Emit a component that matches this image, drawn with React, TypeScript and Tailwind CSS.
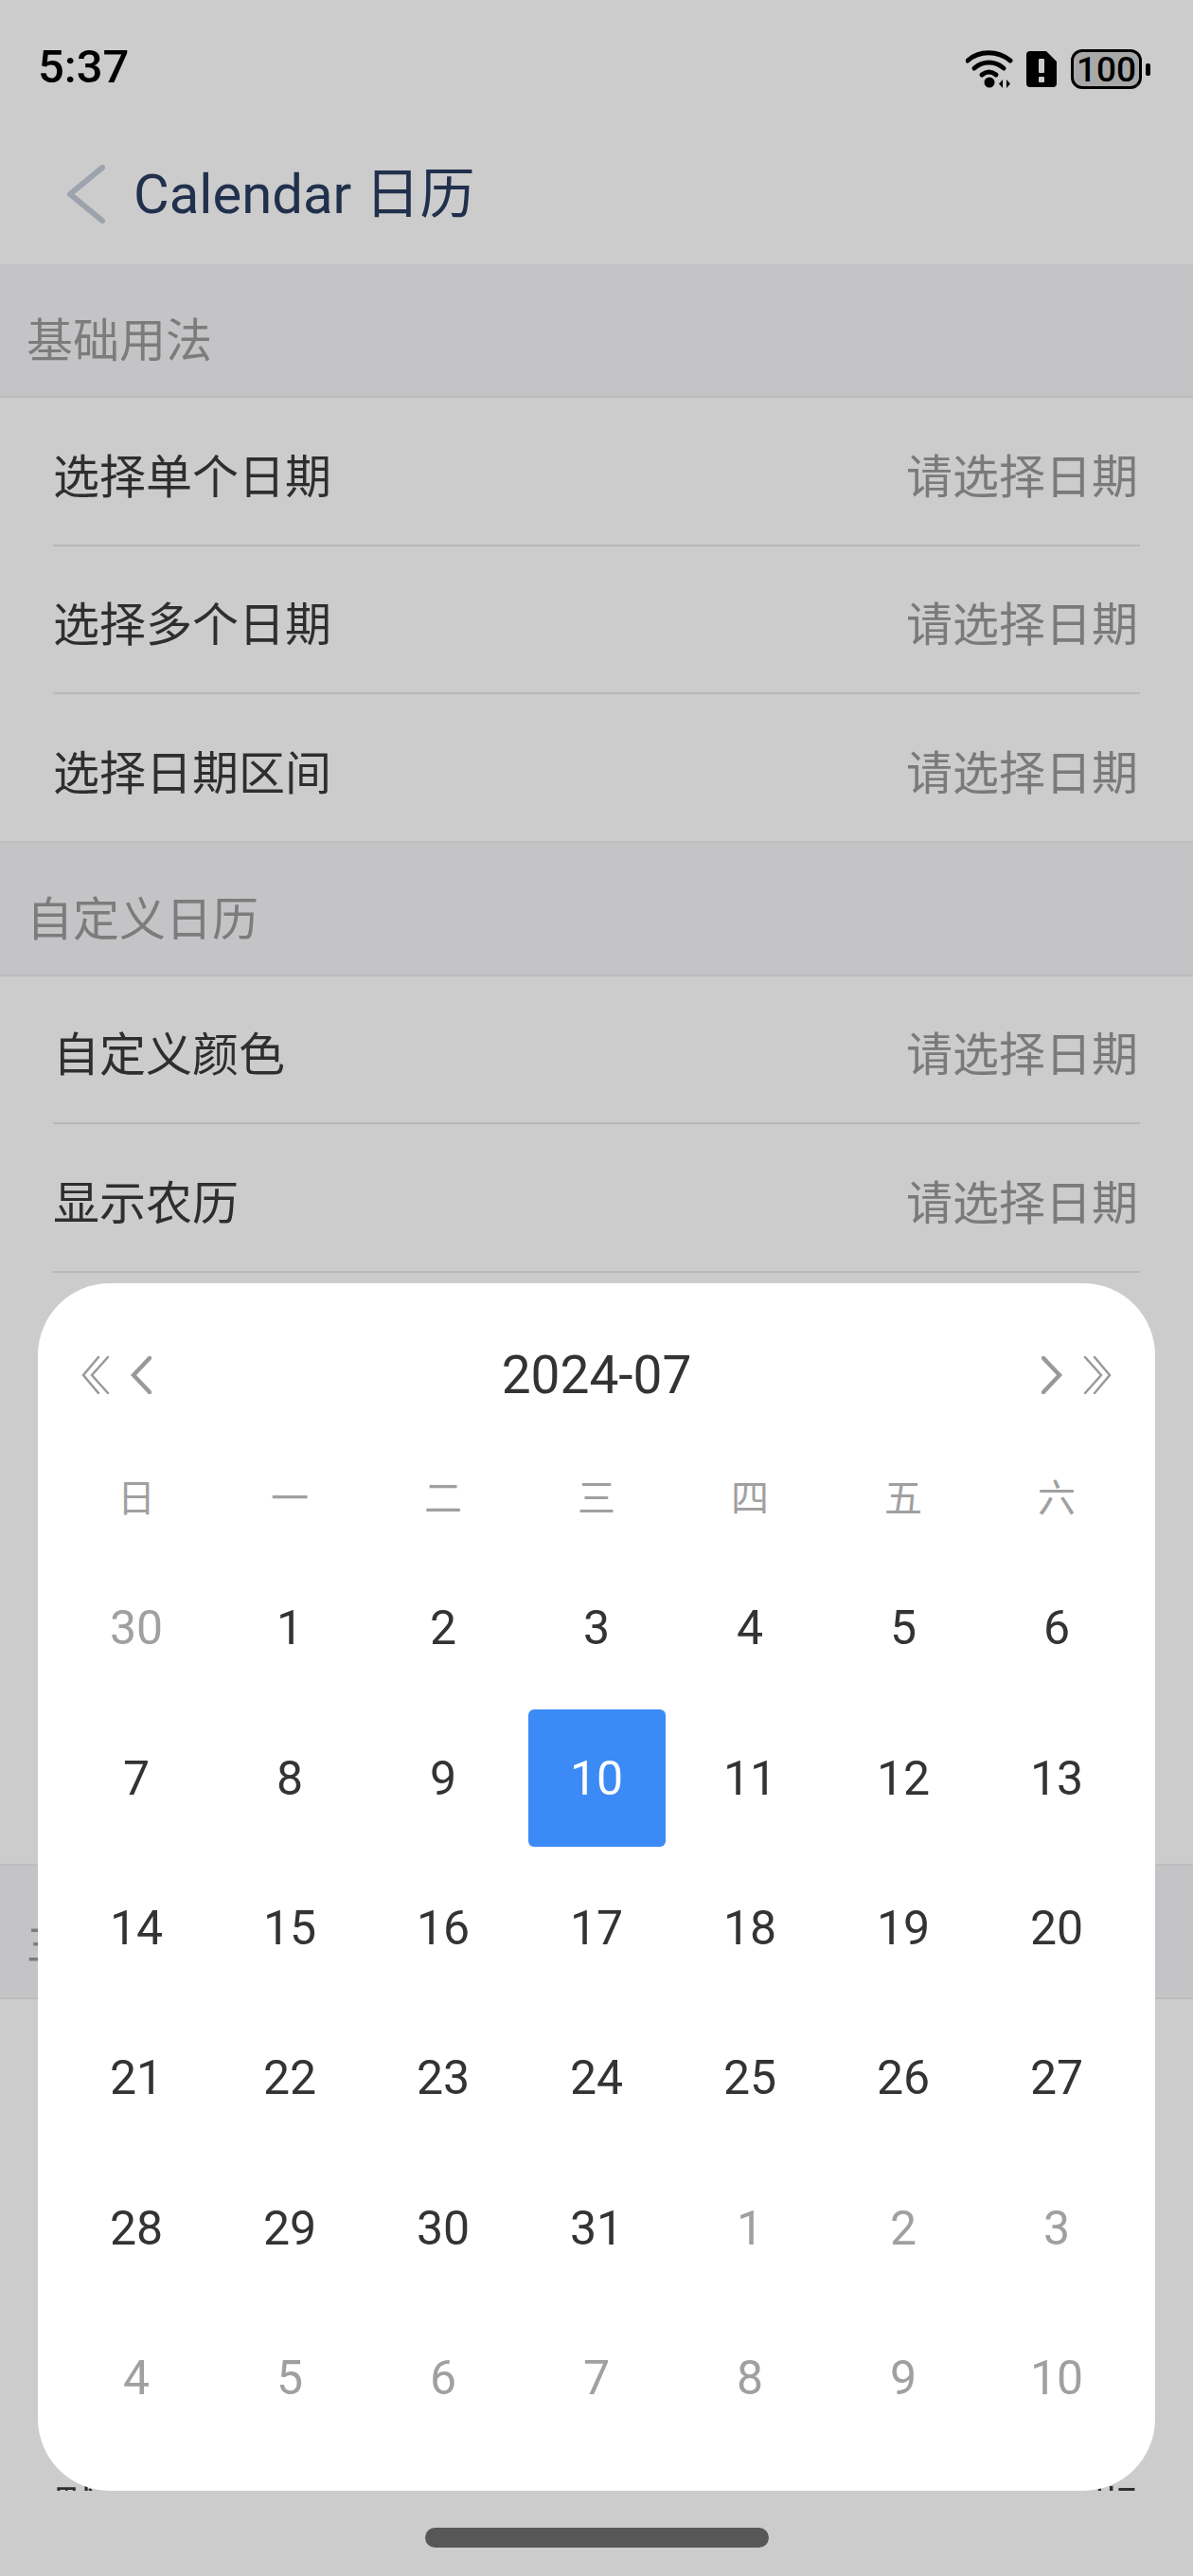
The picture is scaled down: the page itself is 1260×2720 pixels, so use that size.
const CJK = "font-['Roboto','Noto_Sans_CJK_SC',sans-serif]";

function Row({ label, value = "请选择日期", last, className, dark }: { label?: string; value?: string; last?: boolean; className?: string; dark?: boolean }) {
  return (
    <div
      className={`flex items-center justify-between pt-[14px] ${className ?? "h-[156.5px]"} ${
        last ? "border-b-2 border-[#eeeeee] px-[56px]" : "mx-[56px] border-b-2 border-[#e6e6e6]"
      }`}
    >
      <span className="text-[49px] leading-none text-[#3a3a3a]">{label}</span>
      {label && (
        <span className={`mr-[2px] text-[49px] leading-none ${dark ? "text-[#3a3a3a]" : "text-[#999999]"}`}>{value}</span>
      )}
    </div>
  );
}

function SectionHead({ title }: { title: string }) {
  return (
    <div className="flex h-[141px] items-center border-b-2 border-[#ececec] bg-[#f6f6f9] pl-[28px] pt-[24px]">
      <span className="text-[49px] leading-none text-[#9c9c9c]">{title}</span>
    </div>
  );
}

function Wifi() {
  return (
    <svg width="52" height="42" viewBox="0 0 52 42" className="block">
      <g fill="none" stroke="#000" strokeWidth="5" strokeLinecap="round">
        <path d="M2 12C14 1 34 1 47 12" />
        <path d="M9 20C18 12 31 12 40 20" />
        <path d="M17 27C22 23 27 23 32 27" />
      </g>
      <circle cx="25" cy="35" r="5.5" fill="#000" />
      <path d="M39 32v9l-4-4.500zM43 32v9l4-4.500z" fill="#000" />
    </svg>
  );
}

function Sim() {
  return (
    <svg width="32" height="38" viewBox="0 0 32 38" className="block">
      <path d="M4 0H21L32 11V34Q32 38 28 38H4Q0 38 0 34V4Q0 0 4 0Z" fill="#000" />
      <rect x="13" y="8" width="6" height="15" rx="1" fill="#cccccc" />
      <rect x="13" y="27" width="6" height="6" rx="1" fill="#cccccc" />
    </svg>
  );
}

function Battery() {
  return (
    <div className="flex items-center gap-[4px]">
      <div className="flex h-[42px] w-[75px] items-center justify-center rounded-[12px] border-[3.5px] border-black bg-[#a8a8a8] font-['Roboto',sans-serif] text-[37px] font-medium leading-none tracking-[0px] text-black">
        100
      </div>
      <div className="h-[13px] w-[5px] rounded-[2px] bg-black" />
    </div>
  );
}

function ChevLeft({ double }: { double?: boolean }) {
  return double ? (
    <svg width="30" height="40" viewBox="0 0 30 40" className="block" fill="none" stroke="#999999" strokeWidth="2.500" strokeLinecap="round">
      <path d="M18 1L2 20L18 39" />
      <path d="M28 1L11 20L28 39" />
    </svg>
  ) : (
    <svg width="22" height="40" viewBox="0 0 22 40" className="block" fill="none" stroke="#999999" strokeWidth="4.500" strokeLinecap="round">
      <path d="M20 2L3 20L20 38" />
    </svg>
  );
}

function ChevRight({ double }: { double?: boolean }) {
  return double ? (
    <svg width="30" height="40" viewBox="0 0 30 40" className="block" fill="none" stroke="#999999" strokeWidth="2.500" strokeLinecap="round">
      <path d="M12 1L28 20L12 39" />
      <path d="M2 1L19 20L2 39" />
    </svg>
  ) : (
    <svg width="22" height="40" viewBox="0 0 22 40" className="block" fill="none" stroke="#999999" strokeWidth="4.500" strokeLinecap="round">
      <path d="M2 2L19 20L2 38" />
    </svg>
  );
}

const WEEK = ["日", "一", "二", "三", "四", "五", "六"];
const DAYS: [number, boolean][] = [
  [30, true],
  ...Array.from({ length: 31 }, (_, i) => [i + 1, false] as [number, boolean]),
  ...Array.from({ length: 10 }, (_, i) => [i + 1, true] as [number, boolean]),
];

export default function App() {
  return (
    <div className={`relative h-[2720px] w-[1260px] overflow-hidden bg-white ${CJK}`}>
      <div className="h-[2630px] overflow-hidden">
        <div className="h-[279px] bg-white pt-[170px]">
          <div className="flex h-[70px] items-center pl-[70px]">
            <svg width="42" height="62" viewBox="0 0 42 62" className="block" fill="none" stroke="#c3ccd9" strokeWidth="6" strokeLinecap="round" strokeLinejoin="round">
              <path d="M38 3L4 31L38 59" />
            </svg>
            <span className="ml-[29px] text-[58px] leading-none text-[#2a3c60]">Calendar 日历</span>
          </div>
        </div>

        <SectionHead title="基础用法" />
        <Row label="选择单个日期" />
        <Row label="选择多个日期" />
        <Row label="选择日期区间" last />

        <SectionHead title="自定义日历" />
        <Row label="自定义颜色" />
        <Row label="显示农历" />
        <Row />
        <Row />
        <Row />
        <Row last />

        <SectionHead title="主题" />
        <Row />
        <Row />
        <Row />
        <Row label="默认选中" value="日期" dark className="h-[127px] border-b-0" />
      </div>

      <div className="absolute inset-0 bg-black/20" />

      <div className="absolute left-0 right-0 top-0 flex h-[140px] items-start justify-between pl-[40px] pr-[45px] pt-[47px]">
        <span className="font-['Roboto',sans-serif] text-[49px] font-medium leading-[48px] text-black">5:37</span>
        <div className="mt-[5px] flex items-center gap-[15px]">
          <div className="mr-[-3px]">
            <Wifi />
          </div>
          <Sim />
          <Battery />
        </div>
      </div>

      <div className="absolute left-[40px] top-[1355px] h-[1275px] w-[1180px] rounded-[76px] bg-white px-[23px]">
        <div className="flex h-[194px] items-center justify-between pl-[23px] pr-[23px]">
          <div className="flex items-center gap-[22px]">
            <ChevLeft double />
            <ChevLeft />
          </div>
          <span className="text-[55px] leading-none text-[#333333]">2024-07</span>
          <div className="flex items-center gap-[22px]">
            <ChevRight />
            <ChevRight double />
          </div>
        </div>
        <div className="grid h-[64px] grid-cols-7 items-center pt-[3px] text-center text-[40px] leading-none text-[#a0a0a0]">
          {WEEK.map((w) => (
            <span key={w}>{w}</span>
          ))}
        </div>
        <div className="mt-[27px] grid auto-rows-[158.4px] grid-cols-7">
          {DAYS.map(([d, muted], i) => {
            const selected = d === 10 && !muted;
            return (
              <div key={i} className="flex items-center justify-center">
                <div
                  className={`flex h-[145px] w-[145px] items-center justify-center rounded-[6px] text-[50px] leading-none ${
                    selected ? "bg-[#3c8af5] text-white" : muted ? "text-[#a0a0a0]" : "text-[#333333]"
                  }`}
                >
                  {d}
                </div>
              </div>
            );
          })}
        </div>
      </div>

      <div className="absolute left-[449px] top-[2669px] h-[21px] w-[363px] rounded-full bg-[#575757]" />
    </div>
  );
}
